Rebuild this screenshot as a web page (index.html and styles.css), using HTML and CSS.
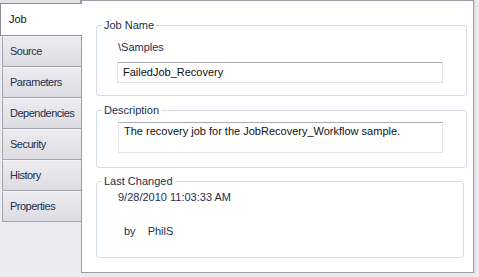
FILE: index.html
```html
<!DOCTYPE html>
<html lang="en">
<head>
    <meta charset="UTF-8">
    <title>Job Properties</title>
    <link rel="stylesheet" href="styles.css">
</head>
<body>
    <div class="tabs">
        <div class="tab-stub"></div>
        <div class="tab active">Job</div>
        <div class="tab">Source</div>
        <div class="tab">Parameters</div>
        <div class="tab">Dependencies</div>
        <div class="tab">Security</div>
        <div class="tab">History</div>
        <div class="tab">Properties</div>
    </div>

    <div class="panel">
        <fieldset class="group group-name">
            <legend>Job Name</legend>
            <div class="path">\Samples</div>
            <div class="input">FailedJob_Recovery</div>
        </fieldset>

        <fieldset class="group group-desc">
            <legend>Description</legend>
            <div class="input memo">The recovery job for the JobRecovery_Workflow sample.</div>
        </fieldset>

        <fieldset class="group group-changed">
            <legend>Last Changed</legend>
            <div class="date">9/28/2010 11:03:33 AM</div>
            <div class="by"><span>by</span><span>PhilS</span></div>
        </fieldset>
    </div>
</body>
</html>
```

FILE: styles.css
```css
body {
    margin: 0;
    display: flex;
    height: 277px;
    background-color: #ececf0;
    font-family: "Liberation Sans", Arial, sans-serif;
    font-size: 11px;
    color: #1e2f4c;
}

.tabs {
    width: 81px;
    display: flex;
    flex-direction: column;
}

.tab-stub {
    height: 3px;
    background-color: #e2e2e6;
    border-right: 1px solid #a0a0aa;
}

.tab {
    height: 29px;
    line-height: 29px;
    margin-left: 2px;
    padding-left: 7px;
    border: 1px solid #a4a4ae;
    border-right: none;
    border-top-color: #f4f4f6;
    background: linear-gradient(#ececf0, #dcdce2);
    letter-spacing: -0.5px;
}

.tab.active {
    position: relative;
    z-index: 1;
    height: 31px;
    line-height: 31px;
    margin-left: 0;
    margin-right: -1px;
    padding-left: 8px;
    border-color: #8e8e98;
    background: #fff;
    color: #111;
    letter-spacing: 0;
}

.panel {
    width: 391px;
    height: 271px;
    background-color: #fff;
    border: 1px solid #9c9ca8;
    box-shadow: 2px 0 0 #dedee4;
}

.group {
    margin: 0 6px 0 14px;
    padding: 0;
    border: 1px solid #d3dce6;
    border-radius: 3px;
}

.group legend {
    margin-left: 5px;
    padding: 0 2px;
    line-height: 14px;
}

.group-name {
    margin-top: 17px;
    padding-bottom: 12px;
}

.group-desc {
    margin-top: 7px;
    padding-bottom: 14px;
}

.group-changed {
    margin-top: 6px;
    margin-right: 9px;
    padding-bottom: 19px;
}

.path {
    margin: 8px 0 0 21px;
    line-height: 14px;
}

.input {
    margin: 8px 0 0 20px;
    width: 319px;
    height: 19px;
    line-height: 19px;
    padding-left: 5px;
    border: 1px solid #e1e6ee;
    border-top-color: #abadb3;
    color: #111;
}

.memo {
    margin: 5px 0 0 21px;
    width: 318px;
    height: 29px;
    line-height: 16px;
}

.date {
    margin: 2px 0 0 21px;
    line-height: 14px;
}

.by {
    margin: 20px 0 0 27px;
    line-height: 14px;
    display: flex;
    gap: 12px;
}
```
